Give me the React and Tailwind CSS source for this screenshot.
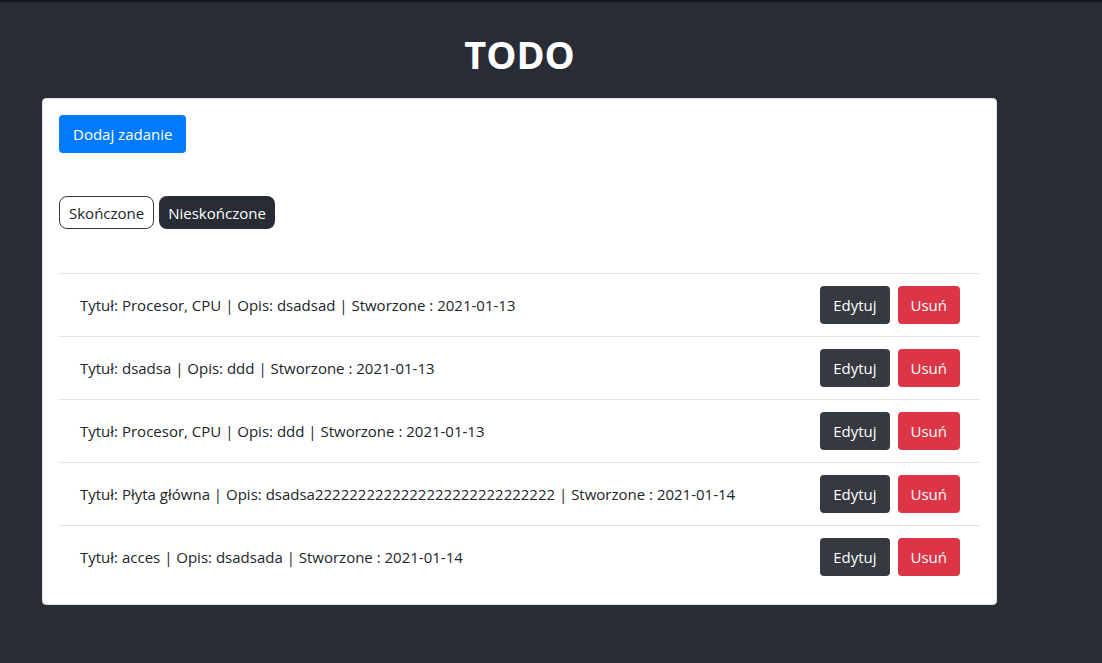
import React from "react";

const todos = [
  { title: "Procesor, CPU", desc: "dsadsad", date: "2021-01-13" },
  { title: "dsadsa", desc: "ddd", date: "2021-01-13" },
  { title: "Procesor, CPU", desc: "ddd", date: "2021-01-13" },
  { title: "Płyta główna", desc: "dsadsa2222222222222222222222222222", date: "2021-01-14" },
  { title: "acces", desc: "dsadsada", date: "2021-01-14" },
];

export default function App() {
  return (
    <div
      className="min-h-[663px] bg-[#282c34] border-t-2 border-[#16171b] text-[#212529]"
      style={{ fontFamily: '"Open Sans", "Noto Sans", sans-serif' }}
    >
      <div className="ml-[42px] w-[955px] pt-[28px]">
        <h1 className="text-center text-[38px] leading-[48px] font-bold text-white mb-[20px]">
          TODO
        </h1>

        <div className="bg-white border border-[#dfe2e6] rounded-[4px] p-4">
          <button
            type="button"
            className="bg-[#007bff] text-white text-[15px] leading-6 px-[14px] py-[7px] rounded-[4px]"
          >
            Dodaj zadanie
          </button>

          {/* filters */}
          <div className="mt-[43px] flex gap-[5px]">
            <button
              type="button"
              className="border border-[#343a40] bg-white rounded-[8px] px-[9px] h-[33px] text-[15px] leading-6"
            >
              Skończone
            </button>
            <button
              type="button"
              className="bg-[#282c34] text-white rounded-[8px] px-[9px] h-[33px] text-[15px] leading-6"
            >
              Nieskończone
            </button>
          </div>

          <ul className="mt-[44px]">
            {todos.map((t, i) => (
              <li
                key={i}
                className="flex items-center justify-between border-t border-[#dee2e6] pl-[21px] pr-5 py-3"
              >
                <span className="text-[15px]">
                  Tytuł: {t.title} | Opis: {t.desc} | Stworzone : {t.date}
                </span>
                <div className="flex gap-2">
                  <button
                    type="button"
                    className="bg-[#343a40] text-white text-[15px] leading-6 px-[13px] py-[7px] rounded-[4px]"
                  >
                    Edytuj
                  </button>
                  <button
                    type="button"
                    className="bg-[#dc3545] text-white text-[15px] leading-6 px-[13px] py-[7px] rounded-[4px]"
                  >
                    Usuń
                  </button>
                </div>
              </li>
            ))}
          </ul>
        </div>
      </div>
    </div>
  );
}
